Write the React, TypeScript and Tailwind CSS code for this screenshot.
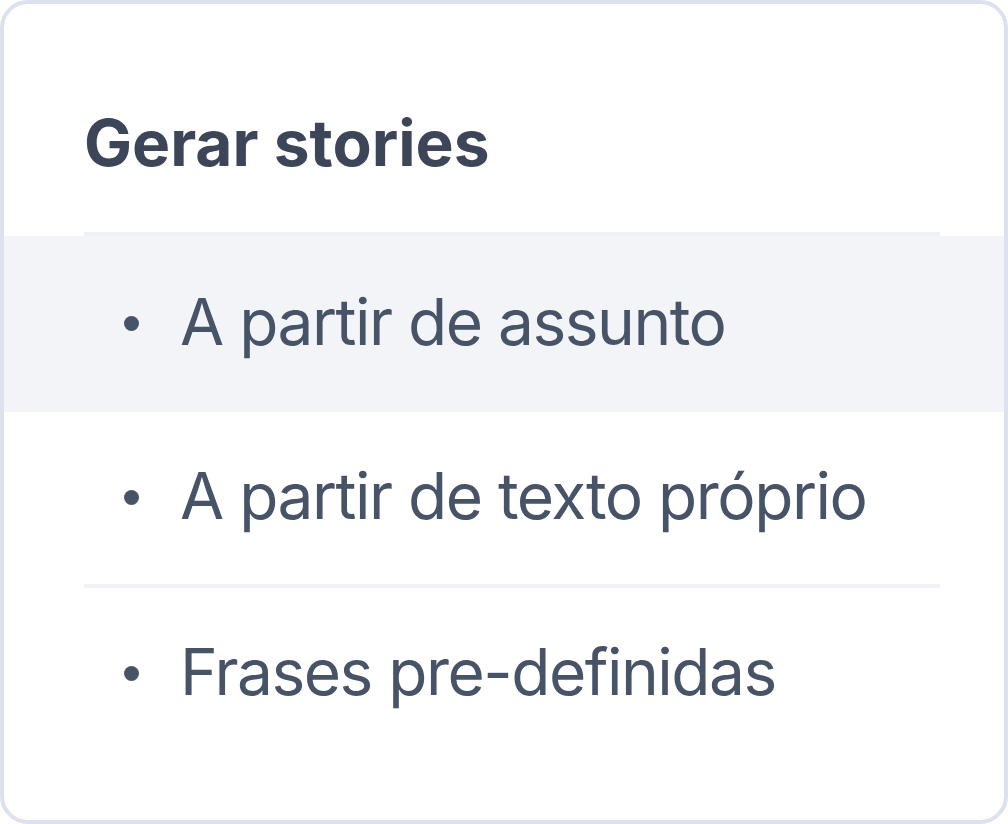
import React from 'react';

const items = [
  { label: 'A partir de assunto', active: true, height: 'h-[176px]' },
  { label: 'A partir de texto próprio', active: false, divider: true, height: 'h-[172px]' },
  { label: 'Frases pre-definidas', active: false, height: 'h-[172px]' },
];

function MenuItem({ label, active, height }: { label: string; active: boolean; height: string }) {
  return (
    <div className={`flex ${height} items-center gap-[41px] pl-[120px] pb-[5px] ${active ? 'bg-[#f2f4f7]' : ''}`}>
      <span className="mt-[3px] h-[15px] w-[15px] shrink-0 rounded-full bg-[#475467]" />
      <span className="text-[64px] leading-none tracking-[-1.5px] text-[#475467]">{label}</span>
    </div>
  );
}

export default function App() {
  return (
    <div
      className="h-[824px] w-[1008px] overflow-hidden rounded-[28px] border-4 border-[#dde1ec] bg-white"
      style={{ fontFamily: 'Inter, "Noto Sans", sans-serif' }}
    >
      <div className="flex h-[228px] items-end pl-[80px] pr-[64px] pb-[57px]">
        <h2 className="text-[64px] font-bold leading-none text-[#3c4658]">Gerar stories</h2>
      </div>
      <div className="ml-[80px] mr-[64px] h-[4px] bg-[#eff1f4]" />
      {items.map((item) => (
        <React.Fragment key={item.label}>
          <MenuItem label={item.label} active={item.active} height={item.height} />
          {item.divider && <div className="ml-[80px] mr-[64px] h-[4px] bg-[#eff1f4]" />}
        </React.Fragment>
      ))}
    </div>
  );
}
